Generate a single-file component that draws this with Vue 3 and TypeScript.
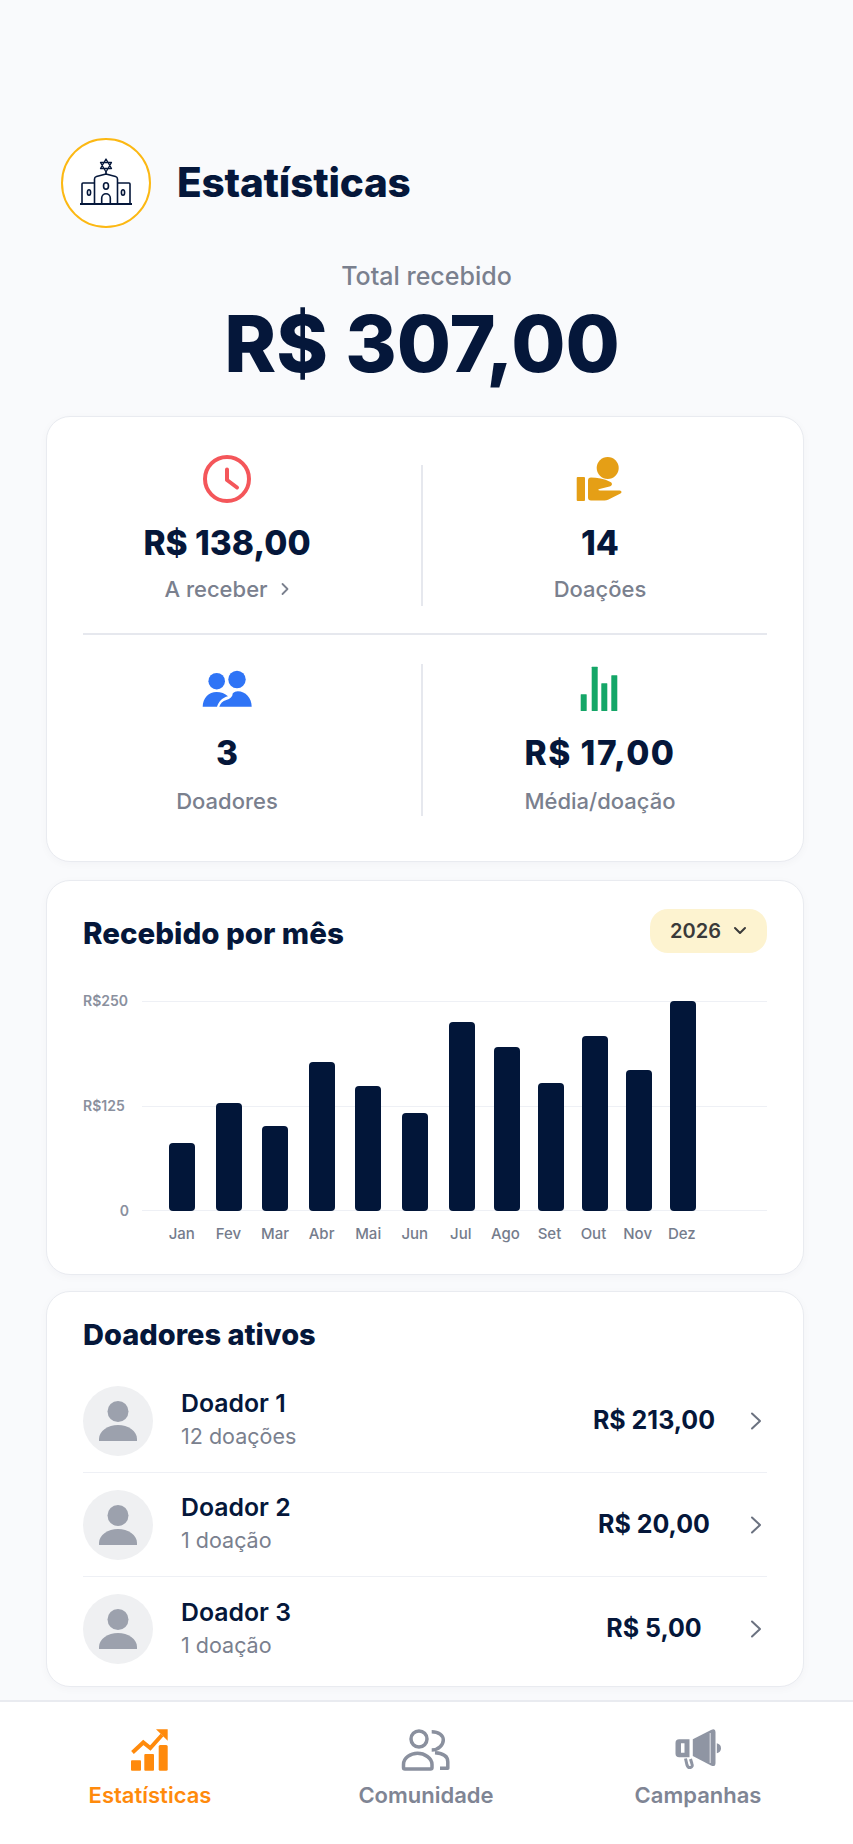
<script setup lang="ts">
interface Bar {
  label: string
  height: number
  slot: number
}

interface Donor {
  name: string
  count: string
  total: string
}

const bars: Bar[] = [
  { label: 'Jan', height: 68, slot: 46.6 },
  { label: 'Fev', height: 108, slot: 46.6 },
  { label: 'Mar', height: 85, slot: 46.6 },
  { label: 'Abr', height: 149, slot: 46.6 },
  { label: 'Mai', height: 125, slot: 46.6 },
  { label: 'Jun', height: 98, slot: 46.6 },
  { label: 'Jul', height: 189, slot: 45.4 },
  { label: 'Ago', height: 164, slot: 44 },
  { label: 'Set', height: 128, slot: 44 },
  { label: 'Out', height: 175, slot: 44 },
  { label: 'Nov', height: 141, slot: 44.4 },
  { label: 'Dez', height: 210, slot: 44 }
]

const donors: Donor[] = [
  { name: 'Doador 1', count: '12 doações', total: 'R$ 213,00' },
  { name: 'Doador 2', count: '1 doação', total: 'R$ 20,00' },
  { name: 'Doador 3', count: '1 doação', total: 'R$ 5,00' }
]
</script>

<template>
  <div class="page">
    <header class="head">
      <div class="logo">
        <svg width="54" height="54" viewBox="0 0 54 54" fill="none" stroke="#05173a" stroke-width="1.6" stroke-linejoin="round">
          <path d="M27 3l5.500 9.500h-11z M27 16l5.500-9.500h-11z" stroke-width="1.300" />
          <path d="M27 16v2" />
          <path d="M15.500 48V23q0-2 2-2.500L27 18l9.500 2.500q2 .5 2 2.500V48" />
          <path d="M15.500 27H4q-1 0-1 1V48 M38.500 27H50q1 0 1 1V48" />
          <path d="M1 48h52" stroke-width="1.900" />
          <path d="M22.700 48v-6a4.300 4.300 0 0 1 8.600 0v6" />
          <ellipse cx="27" cy="30" rx="2.500" ry="3.200" />
          <ellipse cx="10" cy="36.500" rx="1.600" ry="2.700" />
          <ellipse cx="44" cy="36.500" rx="1.600" ry="2.700" />
        </svg>
      </div>
      <h1>Estatísticas</h1>
    </header>

    <section class="total">
      <p>Total recebido</p>
      <strong>R$ 307,00</strong>
    </section>

    <section class="card stats">
      <div class="stat-row first">
        <div class="stat">
          <svg class="stat-icon" width="50" height="50" viewBox="0 0 50 50" fill="none" stroke="#f4565a" stroke-width="4" stroke-linecap="round" stroke-linejoin="round">
            <circle cx="25" cy="25" r="22" />
            <path d="M25 15.500V26l10 7.500" />
          </svg>
          <b>R$ 138,00</b>
          <span class="link">A receber
            <svg width="10" height="14" viewBox="0 0 10 14" fill="none" stroke="currentColor" stroke-width="1.800" stroke-linecap="round" stroke-linejoin="round"><path d="M2.500 2l5 5-5 5" /></svg>
          </span>
        </div>
        <div class="stat">
          <svg class="stat-icon" width="50" height="50" viewBox="0 0 50 50" fill="#e59f16">
            <circle cx="32.700" cy="14" r="11" />
            <rect x="1.700" y="23" width="8.300" height="24" rx="1" />
            <path d="M13 26.500q0-3 3-3c6 0 13 1 19.500 4.500 2.500 1.500 1.500 4-1 4.500l-10 2.500c-2 .7-1.500 1.500.5 1.500h19q2.500-.3 2.500 1.500 0 1-1.500 1.800l-12 6q-1.500.8-3.500.8H16q-3 0-3-3z" />
          </svg>
          <b>14</b>
          <span>Doações</span>
        </div>
      </div>
      <div class="stat-row second">
        <div class="stat">
          <svg class="stat-icon" width="50" height="50" viewBox="0 0 50 50" fill="#2f74f6">
            <circle cx="14.700" cy="17.200" r="8.300" />
            <circle cx="35" cy="15.500" r="8.700" />
            <path d="M.7 42.800C.7 34 7 28 14.500 28c4.500 0 8.500 1.500 11.500 4.200-5.500 1.300-9.500 5.300-11 10.600z" />
            <path d="M17.300 42.800c1-3.500 3.300-5.600 7-6.800 4-1.200 6.200-3.200 6.500-6.800 1.400-1.300 3-2 5-2 7.700 0 13.900 6.500 13.900 15.600z" />
          </svg>
          <b>3</b>
          <span>Doadores</span>
        </div>
        <div class="stat">
          <svg class="stat-icon" width="50" height="50" viewBox="0 0 50 50" fill="#14a667">
            <rect x="5.700" y="30.300" width="6" height="16.700" rx=".5" />
            <rect x="16.700" y="2.700" width="6" height="44.300" rx=".5" />
            <rect x="26.300" y="19.300" width="6" height="27.700" rx=".5" />
            <rect x="36.300" y="11.300" width="6" height="35.700" rx=".5" />
          </svg>
          <b class="wide">R$ 17,00</b>
          <span>Média/doação</span>
        </div>
      </div>
    </section>

    <section class="card chart">
      <div class="chart-head">
        <h2>Recebido por mês</h2>
        <div class="year">2026
          <svg width="14" height="10" viewBox="0 0 14 10" fill="none" stroke="currentColor" stroke-width="2" stroke-linecap="round" stroke-linejoin="round"><path d="M2 2l5 5 5-5" /></svg>
        </div>
      </div>
      <div class="plot">
        <div class="axis">
          <span>R$250</span>
          <span>R$125</span>
          <span>0</span>
        </div>
        <div class="area">
          <div class="lines"><i></i><i></i><i></i></div>
          <div class="bars">
            <div v-for="b in bars" :key="b.label" class="slot" :style="{ width: b.slot + 'px' }">
              <div class="bar" :style="{ height: b.height + 'px' }"></div>
            </div>
          </div>
          <div class="months">
            <span v-for="b in bars" :key="b.label" :style="{ width: b.slot + 'px' }">{{ b.label }}</span>
          </div>
        </div>
      </div>
    </section>

    <section class="card donors">
      <h2>Doadores ativos</h2>
      <div v-for="d in donors" :key="d.name" class="donor">
        <div class="avatar">
          <svg width="38" height="40" viewBox="0 0 38 40" fill="#9ca1ad">
            <circle cx="19" cy="10.500" r="10.500" />
            <path d="M0 40v-2C0 30 9 24 19 24s19 6 19 14v2z" />
          </svg>
        </div>
        <div class="who">
          <div class="name">{{ d.name }}</div>
          <div class="count">{{ d.count }}</div>
        </div>
        <div class="amount">{{ d.total }}</div>
        <svg class="chev" width="12" height="18" viewBox="0 0 12 18" fill="none" stroke="#6b7280" stroke-width="2" stroke-linecap="round" stroke-linejoin="round"><path d="M2 1.500l8 7.500-8 7.500" /></svg>
      </div>
    </section>

    <nav class="tabs">
      <div class="tab active">
        <svg width="40" height="44" viewBox="0 0 40 44" fill="#ff8a0c">
          <rect x="1" y="32.300" width="10" height="10.400" rx="1" />
          <rect x="14.300" y="26" width="9.700" height="16.700" rx="1" />
          <rect x="28.700" y="17" width="9" height="25.700" rx="1.500" />
          <path d="M2.500 24.500l10.800-10 7 5.500L32 7" fill="none" stroke="#ff8a0c" stroke-width="4" />
          <path d="M26 1.300h11.700v11.400z" />
        </svg>
        <span>Estatísticas</span>
      </div>
      <div class="tab">
        <svg width="50" height="44" viewBox="0 0 50 44" fill="none" stroke="#8a909e" stroke-width="3.500" stroke-linejoin="round">
          <circle cx="18" cy="11" r="8" />
          <path d="M30.700 3.700c7 0 11.600 3.700 11.600 8.300s-4.600 10-11.600 10" />
          <path d="M2.500 39.500v-3c0-6.500 7-11.200 14-11.200s14.500 4.700 14.500 11.200v3q0 1.500-1.500 1.500H4q-1.500 0-1.500-1.500z" />
          <path d="M34 24.700c8 .5 12.800 3.500 12.800 9v6.600H39" />
        </svg>
        <span>Comunidade</span>
      </div>
      <div class="tab">
        <svg width="46" height="44" viewBox="0 0 46 44" fill="#8f95a3">
          <path d="M.5 15q0-3.700 3.700-3.700H14.500v18H4.200Q.5 29.300.5 25.500z M6 15.300v9.400h3.500v-9.400z" fill-rule="evenodd" />
          <path d="M17.800 11.300L36 2q4.500-2 4.500 2v31q0 4.500-4.500 2.500L17.800 28z" />
          <rect x="34.500" y="5" width="1.500" height="30" fill="#c9ccd4" />
          <path d="M41.800 15.300q4.200 1 4.200 5t-4.200 5z" />
          <path d="M10.500 30.500l1.500 6.500q1 3 3.500 2.500 2.500-.8 1.500-3.500l-1.500-5" fill="none" stroke="#8f95a3" stroke-width="3" />
        </svg>
        <span>Campanhas</span>
      </div>
    </nav>
  </div>
</template>

<style scoped>
.page {
  width: 853px;
  height: 1844px;
  box-sizing: border-box;
  padding-top: 137px;
  background: #f9fafc;
  color: #05173a;
  font-family: Inter, "Liberation Sans", sans-serif;
  display: flex;
  flex-direction: column;
  overflow: hidden;
}
.head {
  display: flex;
  align-items: center;
  gap: 26px;
  padding-left: 61px;
  height: 92px;
}
.logo {
  width: 90px;
  height: 90px;
  box-sizing: border-box;
  border: 2.500px solid #fcb813;
  border-radius: 50%;
  background: #fff;
  display: flex;
  align-items: center;
  justify-content: center;
}
h1 {
  margin: 0 0 2px;
  font-size: 40.500px;
  font-weight: 800;
  letter-spacing: -0.2px;
}
.total {
  margin-top: 32px;
  text-align: center;
}
.total p {
  margin: 0;
  font-size: 25px;
  line-height: 30px;
  font-weight: 500;
  color: #7a808e;
}
.total strong {
  display: block;
  margin-top: 13px;
  padding-right: 9px;
  font-size: 78.500px;
  line-height: 80px;
  font-weight: 800;
}
.card {
  margin: 0 49px 0 46px;
  box-sizing: border-box;
  background: #fff;
  border: 1px solid #e9ebf0;
  border-radius: 24px;
  box-shadow: 0 2px 8px rgba(20, 30, 60, 0.03);
}
.stats {
  margin-top: 32px;
  height: 446px;
  padding: 0 36px;
}
.stat-row {
  display: grid;
  grid-template-columns: 338px 1fr;
}
.first {
  height: 218px;
  padding-top: 48px;
  box-sizing: border-box;
  border-bottom: 2px solid #e6e8ee;
}
.second {
  padding-top: 29px;
}
.stat {
  height: 141px;
  box-sizing: border-box;
  padding-right: 50px;
  display: flex;
  flex-direction: column;
  align-items: center;
  font-size: 22px;
  font-weight: 500;
  color: #7a808e;
}
.second .stat {
  height: 152px;
}
.stat + .stat {
  padding-right: 0;
  padding-left: 10px;
  border-left: 2px solid #e6e8ee;
}
.stat-icon {
  height: 50px;
  margin-top: -11px;
  flex: none;
}
.second .stat-icon {
  margin-top: 0;
}
.stat b {
  margin-top: 19px;
  font-size: 33.500px;
  line-height: 40px;
  font-weight: 800;
  color: #05173a;
}
.stat b.wide {
  letter-spacing: 1.500px;
}
.stat > span {
  margin-top: 12px;
  line-height: 28px;
}
.second .stat > span {
  margin-top: 14px;
}
.link {
  display: flex;
  align-items: center;
  gap: 12px;
}
.chart {
  margin-top: 18px;
  height: 395px;
  padding: 28px 36px 0;
}
.chart-head {
  display: flex;
  justify-content: space-between;
  align-items: center;
  height: 44px;
}
.chart-head h2 {
  padding-top: 4px;
}
h2 {
  margin: 0;
  font-size: 29.500px;
  font-weight: 800;
}
.year {
  width: 117px;
  height: 44px;
  border-radius: 18px;
  background: #fdf3d0;
  color: #3a3a3a;
  font-size: 20px;
  font-weight: 600;
  display: flex;
  align-items: center;
  justify-content: center;
  gap: 12px;
}
.plot {
  display: flex;
  margin-top: 48px;
}
.axis {
  width: 59px;
  height: 210px;
  display: flex;
  flex-direction: column;
  justify-content: space-between;
  font-size: 14px;
  font-weight: 600;
  color: #8a909e;
  margin-top: -9px;
}
.axis span {
  height: 18px;
  line-height: 18px;
}
.axis span:last-child {
  text-align: right;
  padding-right: 13px;
  margin-bottom: -18px;
}
.area {
  position: relative;
  flex: 1;
}
.lines {
  position: absolute;
  inset: 0 0 auto 0;
  height: 210px;
  display: flex;
  flex-direction: column;
  justify-content: space-between;
}
.lines i {
  display: block;
  height: 1px;
  background: #eef0f5;
}
.bars {
  position: relative;
  height: 210px;
  display: flex;
  align-items: flex-end;
  padding-left: 16px;
}
.slot {
  display: flex;
  justify-content: flex-start;
  padding-left: 11px;
  box-sizing: border-box;
}
.bar {
  width: 26px;
  background: #021639;
  border-radius: 4px;
}
.months {
  display: flex;
  padding-left: 16px;
  margin-top: 13px;
  font-size: 15px;
  font-weight: 500;
  color: #757c8c;
}
.months span {
  text-align: center;
  padding-left: 1px;
  box-sizing: border-box;
  white-space: nowrap;
}
.donors {
  margin-top: 16px;
  height: 396px;
  padding: 24px 36px 0;
}
.donor {
  height: 104px;
  display: flex;
  align-items: center;
  border-bottom: 1px solid #eef0f5;
  box-sizing: border-box;
}
.donor:last-child {
  border-bottom: 0;
}
.donors h2 {
  font-size: 29px;
  line-height: 38px;
  margin-bottom: 15px;
}
.avatar {
  width: 70px;
  height: 70px;
  border-radius: 50%;
  background: #eff0f2;
  display: flex;
  align-items: center;
  justify-content: center;
}
.who {
  margin-left: 28px;
  margin-top: -3px;
  flex: 1;
}
.name {
  font-size: 24.800px;
  line-height: 32px;
  font-weight: 600;
}
.count {
  font-size: 21.500px;
  line-height: 30px;
  color: #7a808e;
  margin-top: 2px;
}
.amount {
  font-size: 25px;
  font-weight: 700;
  width: 170px;
  text-align: center;
  white-space: nowrap;
  margin-top: -2px;
}
.chev {
  margin-left: 11px;
  margin-right: 5px;
}
.tabs {
  margin-top: auto;
  height: 144px;
  background: #fff;
  border-top: 2px solid #e9ebf0;
  box-sizing: border-box;
  display: grid;
  grid-template-columns: 300px 252px 292px;
}
.tab {
  display: flex;
  flex-direction: column;
  align-items: center;
  padding-top: 26px;
  font-size: 22px;
  font-weight: 600;
  color: #7f8594;
}
.tab svg {
  height: 44px;
}
.tab span {
  margin-top: 9px;
  line-height: 28px;
}
.active {
  color: #ff8a0c;
}
</style>
